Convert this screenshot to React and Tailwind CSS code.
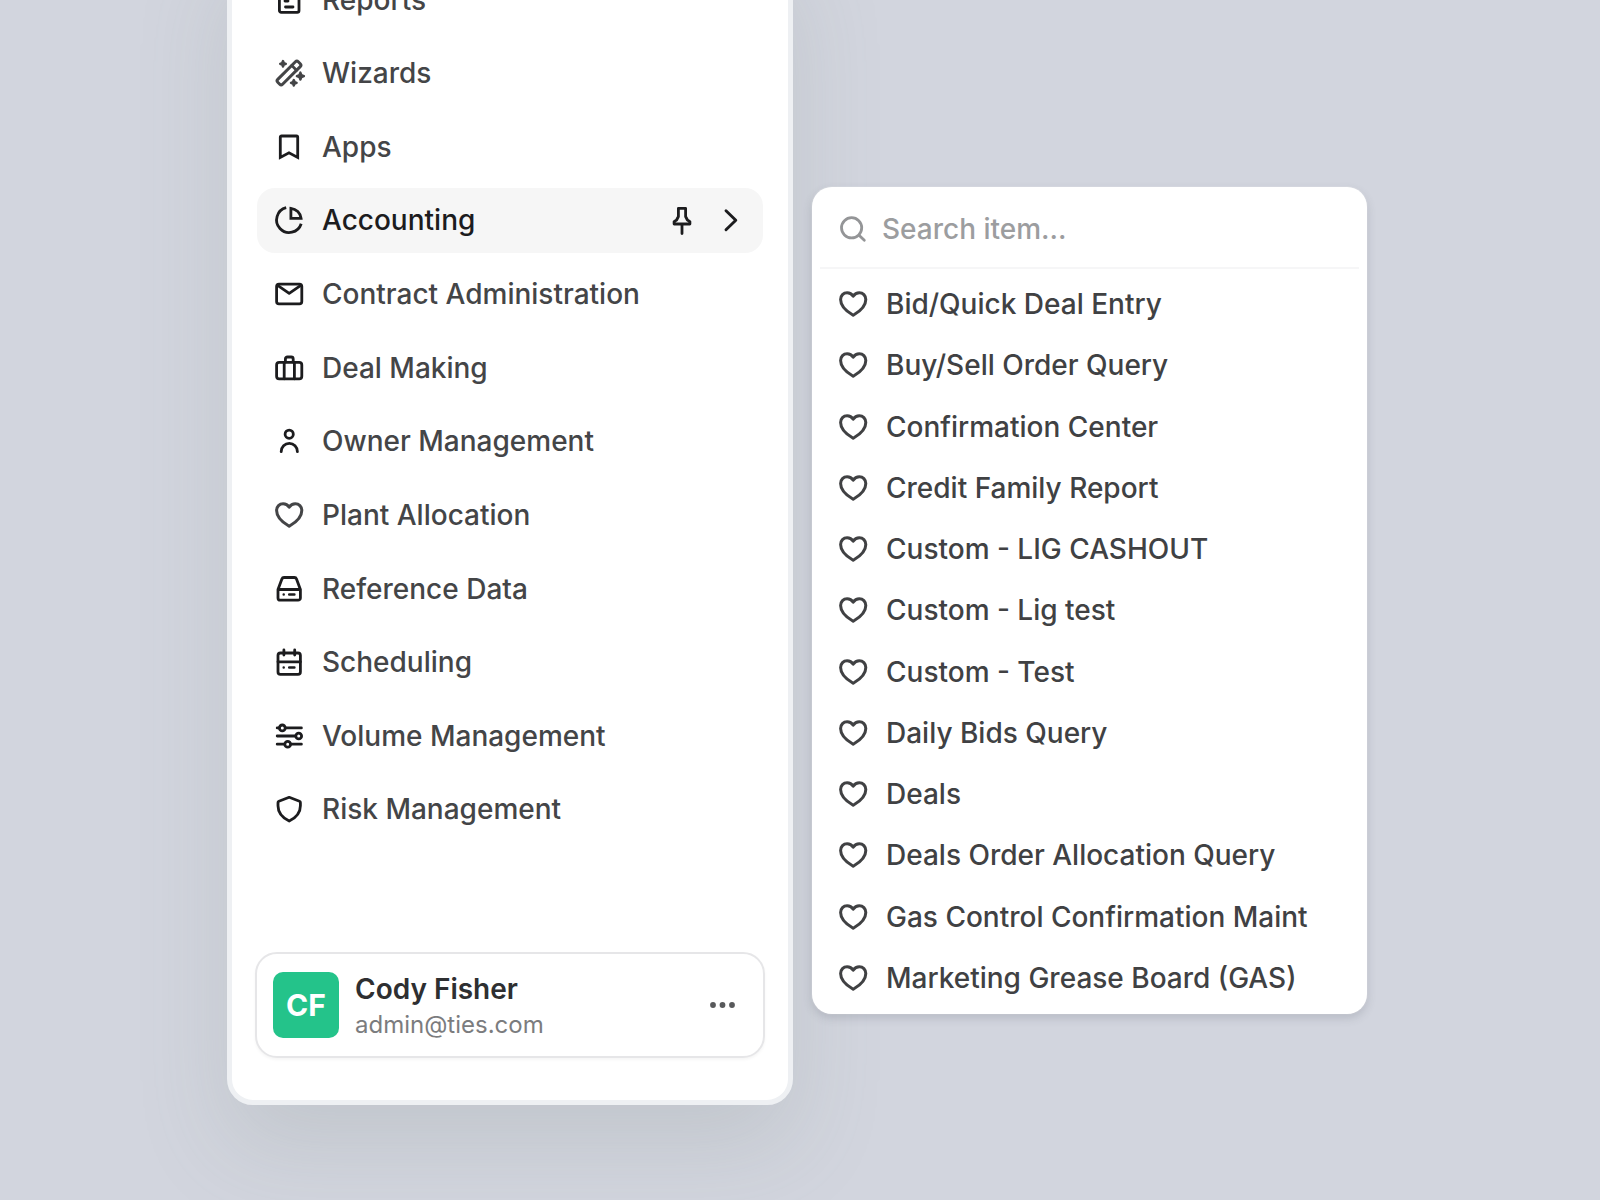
import { useState } from 'react';

const NAV = [
  { id: 'reports', label: 'Reports', icon: ReportsIcon },
  { id: 'wizards', label: 'Wizards', icon: WandIcon, soft: true },
  { id: 'apps', label: 'Apps', icon: BookmarkIcon },
  { id: 'accounting', label: 'Accounting', icon: PieIcon },
  { id: 'contracts', label: 'Contract Administration', icon: MailIcon },
  { id: 'deals', label: 'Deal Making', icon: SuitcaseIcon },
  { id: 'owners', label: 'Owner Management', icon: UserIcon },
  { id: 'plant', label: 'Plant Allocation', icon: HeartIcon, soft: true },
  { id: 'reference', label: 'Reference Data', icon: DriveIcon },
  { id: 'scheduling', label: 'Scheduling', icon: CalendarIcon },
  { id: 'volume', label: 'Volume Management', icon: SlidersIcon },
  { id: 'risk', label: 'Risk Management', icon: ShieldIcon },
];

const ITEMS = [
  'Bid/Quick Deal Entry',
  'Buy/Sell Order Query',
  'Confirmation Center',
  'Credit Family Report',
  'Custom - LIG CASHOUT',
  'Custom - Lig test',
  'Custom - Test',
  'Daily Bids Query',
  'Deals',
  'Deals Order Allocation Query',
  'Gas Control Confirmation Maint',
  'Marketing Grease Board (GAS)',
];

export default function App() {
  const [active, setActive] = useState('accounting');

  return (
    <div className="h-screen overflow-hidden bg-[#d2d5de] pl-[227px] pr-[233px] pb-[95px] font-['Inter',sans-serif]">
      <div className="h-full grid grid-cols-[566fr_555fr] gap-[19px]">
        <Sidebar active={active} onSelect={setActive} />
        <SubMenu />
      </div>
    </div>
  );
}

function Sidebar({ active, onSelect }) {
  return (
    <aside className="-mt-[60px] flex flex-col rounded-[26px] border-5 border-[#eef0f3] bg-white px-[25px] pt-[22px] pb-[42px] shadow-[0_40px_90px_0_rgba(110,122,116,0.17)]">
      <nav className="flex-1 flex flex-col justify-between mb-[110px]">
        {NAV.map((n) => (
          <NavItem key={n.id} item={n} active={n.id === active} onSelect={onSelect} />
        ))}
      </nav>
      <UserCard />
    </aside>
  );
}

function NavItem({ item, active, onSelect }) {
  const Glyph = item.icon;
  return (
    <div className={`h-[65px] shrink-0 flex items-center rounded-[18px] pr-[17px] ${active ? 'bg-[#f6f6f6] text-[#1c1c1e]' : 'text-[#444547]'}`}>
      <button
        type="button"
        onClick={() => onSelect(item.id)}
        className="h-full flex-1 flex items-center gap-[17px] pl-4 text-left text-[28px] font-medium"
      >
        <Glyph className={item.soft ? 'text-[#444547]' : 'text-[#1c1c1e]'} />
        {item.label}
      </button>
      {active && (
        <div className="flex items-center gap-4">
          <button type="button" aria-label="Pin"><PinIcon /></button>
          <button type="button" aria-label="Open"><ChevronIcon /></button>
        </div>
      )}
    </div>
  );
}

function UserCard() {
  return (
    <div className="-mx-[2px] flex items-center gap-4 rounded-[22px] border-2 border-[#e6e6e8] bg-white px-4 py-[13px] shadow-[0_2px_3px_rgba(0,0,0,0.04)]">
      <div className="size-[66px] rounded-[10px] bg-[#24c38a] flex items-center justify-center text-[30px] font-bold text-white">CF</div>
      <div className="flex-1 pt-1">
        <div className="text-[28px] leading-[36px] font-semibold text-[#2e2f31]">Cody Fisher</div>
        <div className="text-[24px] leading-[36px] text-[#7b7c7e]">admin@ties.com</div>
      </div>
      <button type="button" aria-label="More" className="mr-2 text-[#58595b]"><DotsIcon /></button>
    </div>
  );
}

function SubMenu() {
  return (
    <section className="mt-[187px] mb-[91px] flex flex-col rounded-[20px] bg-white px-2 pb-4 shadow-[0_4px_10px_rgba(70,75,90,0.2),0_0_2px_rgba(255,255,255,0.6)]">
      <label className="h-[82px] shrink-0 flex items-center gap-[13px] border-b-2 border-[#f6f6f7] pt-1 pl-[17px] text-[#949597]">
        <SearchIcon />
        <input
          type="text"
          aria-label="Search item"
          placeholder="Search item..."
          className="flex-1 min-w-0 bg-transparent text-[28px] font-medium outline-none text-[#404143] placeholder:text-[#9c9d9f]"
        />
      </label>
      <ul className="flex-1 flex flex-col justify-between pt-[15px]">
        {ITEMS.map((label) => (
          <li key={label}>
            <button type="button" className="h-10 w-full flex items-center gap-[17px] pl-[17px] text-left text-[28px] font-medium text-[#404143]">
              <HeartIcon />
              {label}
            </button>
          </li>
        ))}
      </ul>
    </section>
  );
}

function Icon({ className = '', children }) {
  return (
    <svg
      viewBox="0 0 32 32"
      className={`size-8 shrink-0 overflow-visible ${className}`}
      fill="none"
      stroke="currentColor"
      strokeWidth="2.8"
      strokeLinecap="round"
      strokeLinejoin="round"
      aria-hidden="true"
    >
      {children}
    </svg>
  );
}

function ReportsIcon(props) {
  return (
    <Icon {...props}>
      <path d="M20 3.6H8.2A1.8 1.8 0 0 0 6.4 5.4v21.2a1.8 1.8 0 0 0 1.8 1.8h16a1.8 1.8 0 0 0 1.8-1.8V9.6z" />
      <path d="M12 11.5h3M12 17h3M12.500 23h7.500" />
    </Icon>
  );
}

function WandIcon(props) {
  return (
    <Icon {...props}>
      <rect x="1.500" y="12.600" width="29" height="6.800" rx="2" transform="rotate(-45 16 16)" strokeWidth="3" />
      <path d="M18.800 8.500l4.700 4.700" strokeWidth="2.800" />
      <g fill="currentColor" strokeWidth="2.400">
        <path d="M10 4l.8 2 2 .8-2 .8-.8 2-.8-2-2-.8 2-.8z" />
        <path d="M27.400 15.600l1 2.500 2.500 1-2.500 1-1 2.500-1-2.500-2.500-1 2.500-1z" />
        <path d="M20.800 23l.8 2 2 .8-2 .8-.8 2-.8-2-2-.8 2-.8z" />
      </g>
    </Icon>
  );
}

function BookmarkIcon(props) {
  return (
    <Icon {...props}>
      <path strokeLinejoin="miter" strokeLinecap="butt" d="M7.300 26.400V6.200A1.200 1.200 0 0 1 8.500 5h15a1.200 1.200 0 0 1 1.200 1.200v20.200L16 21.800z" />
    </Icon>
  );
}

function PieIcon(props) {
  return (
    <Icon {...props}>
      <path strokeLinecap="butt" d="M13.200 3.700A12.600 12.600 0 1 0 28.200 19.800" />
      <path strokeLinejoin="miter" d="M17.900 4.300V14.400H28.100A11.400 11.400 0 0 0 17.900 4.300z" />
    </Icon>
  );
}

function MailIcon(props) {
  return (
    <Icon {...props}>
      <rect x="3.600" y="6.100" width="25.200" height="19.700" rx="2.400" />
      <path d="M4.600 7.400L16.200 15.400L27.800 7.400" />
    </Icon>
  );
}

function SuitcaseIcon(props) {
  return (
    <Icon {...props}>
      <rect x="3.600" y="10.300" width="25.200" height="16.500" rx="2.600" />
      <path d="M11.200 10.300v16.500M21.400 10.300v16.500M12.400 10V7a2 2 0 0 1 2-2h3.800a2 2 0 0 1 2 2v3" />
    </Icon>
  );
}

function UserIcon(props) {
  return (
    <Icon {...props}>
      <circle cx="16.200" cy="9.200" r="4.100" />
      <path d="M8.200 26.700a8.100 8.300 0 0 1 16.200 0" />
    </Icon>
  );
}

function HeartIcon(props) {
  return (
    <Icon {...props}>
      <path strokeWidth="3" d="M16.200 27.200C13.600 25.700 3.600 20.400 3.600 11.500C3.600 7.600 6.500 4.700 10.100 4.700C12.700 4.700 14.800 6 16.200 8.200C17.600 6 19.700 4.700 22.300 4.700C25.900 4.700 28.800 7.600 28.800 11.500C28.800 20.400 18.800 25.700 16.200 27.200z" />
    </Icon>
  );
}

function DriveIcon(props) {
  return (
    <Icon {...props}>
      <path d="M5 16.500L8.900 6a2.300 2.300 0 0 1 2.200-1.500h10.200A2.300 2.300 0 0 1 23.500 6l3.900 10.500v8.400a2.300 2.300 0 0 1-2.300 2.300H7.300A2.300 2.300 0 0 1 5 24.900zM5 16.500h22.400" />
      <path d="M10.700 21.600v.01M16.200 21.600h5.200" strokeWidth="2.500" />
    </Icon>
  );
}

function CalendarIcon(props) {
  return (
    <Icon {...props}>
      <rect x="5" y="7" width="22.400" height="21.300" rx="2.400" />
      <path d="M5 15.800h22.400M10.900 4v5M21.700 4v5" />
      <path d="M10.700 21.600v.01M16.200 21.600h5.200" strokeWidth="2.500" />
    </Icon>
  );
}

function SlidersIcon(props) {
  return (
    <Icon {...props}>
      <path d="M4.200 7.900h2M12.400 7.900h16M4.200 16h18M4.200 24.200h7.500M17.800 24.200h10.600" />
      <circle cx="9.300" cy="7.900" r="2.900" />
      <circle cx="25.700" cy="16" r="2.900" />
      <circle cx="14.700" cy="24.200" r="2.900" />
    </Icon>
  );
}

function ShieldIcon(props) {
  return (
    <Icon {...props}>
      <path d="M16.200 4.300L26.500 8.200a1.400 1.400 0 0 1 .9 1.400v3.200c0 7.300-5 12.300-11.200 15.300C10 25.100 5 20.100 5 12.800V9.600a1.400 1.400 0 0 1 .9-1.400z" />
    </Icon>
  );
}

function PinIcon() {
  return (
    <Icon>
      <path d="M12.400 4.300h7.200v8.200l1.800 3.500 2.500 1.600V20H8.100v-2.400l2.500-1.600 1.800-3.500zM16 20v9.600" />
    </Icon>
  );
}

function ChevronIcon() {
  return (
    <Icon>
      <path d="M12 6.700L21.800 16.200L12 25.800" strokeWidth="2.900" />
    </Icon>
  );
}

function SearchIcon() {
  return (
    <Icon>
      <circle cx="14.600" cy="14.800" r="10.100" />
      <path d="M22.300 22.500L27.300 27.300" />
    </Icon>
  );
}

function DotsIcon() {
  return (
    <Icon>
      <g fill="currentColor" stroke="none">
        <circle cx="6" cy="16" r="2.900" />
        <circle cx="15.500" cy="16" r="2.900" />
        <circle cx="25" cy="16" r="2.900" />
      </g>
    </Icon>
  );
}
